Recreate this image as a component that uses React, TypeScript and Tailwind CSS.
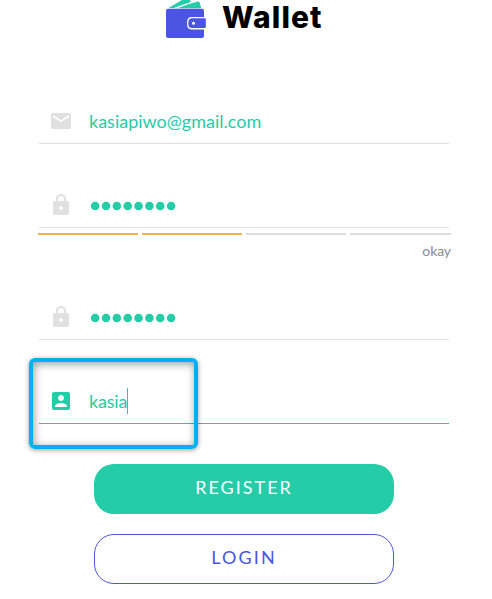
import type { ReactNode } from 'react';

const paths = {
  email: 'M20 4H4c-1.1 0-1.99.9-1.99 2L2 18c0 1.1.9 2 2 2h16c1.1 0 2-.9 2-2V6c0-1.1-.9-2-2-2zm0 4l-8 5-8-5V6l8 5 8-5v2z',
  lock: 'M18 8h-1V6c0-2.76-2.24-5-5-5S7 3.24 7 6v2H6c-1.1 0-2 .9-2 2v10c0 1.1.9 2 2 2h12c1.1 0 2-.9 2-2V10c0-1.1-.9-2-2-2zm-6 9c-1.1 0-2-.9-2-2s.9-2 2-2 2 .9 2 2-.9 2-2 2zm3.1-9H8.9V6c0-1.71 1.39-3.1 3.1-3.1 1.71 0 3.1 1.39 3.1 3.1v2z',
  account: 'M3 5v14c0 1.1.89 2 2 2h14c1.1 0 2-.9 2-2V5c0-1.1-.9-2-2-2H5c-1.11 0-2 .9-2 2zm12 4c0 1.66-1.34 3-3 3s-3-1.34-3-3 1.34-3 3-3 3 1.34 3 3zm-9 8c0-2 4-3.1 6-3.1s6 1.1 6 3.1v1H6v-1z',
};

function Field({ icon, active, children }: { icon: keyof typeof paths; active?: boolean; children: ReactNode }) {
  return (
    <div className={`flex h-[35px] w-[410px] items-start border-b pl-2.5 ${active ? 'border-[#24cca7]' : 'border-[#e0e0e0]'}`}>
      <svg viewBox="0 0 24 24" className={`size-6 shrink-0 ${active ? 'fill-[#24cca7]' : 'fill-[#e0e0e0]'}`}>
        <path d={paths[icon]} />
      </svg>
      <div className="ml-4 flex h-6 items-center text-[18px] leading-6 text-[#24cca7]">{children}</div>
    </div>
  );
}

function Dots() {
  return (
    <svg viewBox="0 0 90 24" className="h-6 w-[90px] fill-[#24cca7]">
      {Array.from({ length: 8 }, (_, i) => (
        <circle key={i} cx={6.15 + i * 10.85} cy="13" r="4.3" />
      ))}
    </svg>
  );
}

function Logo() {
  return (
    <svg viewBox="0 0 41 39" className="h-[39px] w-[41px] shrink-0">
      <path d="M2.5 8 16 0h8l1 2L9 8z" fill="#24cca7" />
      <path d="M11 8.200 22 4.200 32 1.600q1.200-.2 1.600 1L35 7q0 1.200-1 1.200z" fill="#24cca7" />
      <path d="m8 8.500 18-6.300" stroke="#fff" strokeWidth="1" />
      <rect y="8.700" width="38" height="29.300" rx="2" fill="#4a56e2" />
      <path d="M41 17H25.500c-3 0-4.500 2-4.500 6.200s1.500 6.200 4.500 6.200H41z" fill="#fff" />
      <path d="M38.500 18.300H26c-2.600 0-3.700 1.600-3.700 4.900s1.100 4.900 3.700 4.900h12.500c.8 0 1.300-.5 1.300-1.300v-7.200c0-.8-.5-1.300-1.300-1.300z" fill="#4a56e2" />
      <circle cx="27.500" cy="23.300" r="1.500" fill="#fff" />
    </svg>
  );
}

export default function App() {
  return (
    <main className="relative h-[599px] w-[492px] overflow-hidden bg-white font-['Lato',sans-serif]">
      <header className="flex h-[109px] items-start pl-[166px]">
        <Logo />
        <h1 className="ml-[15px] font-['Inter',sans-serif] text-[30px] leading-[35px] font-extrabold tracking-[1.1px] text-black">Wallet</h1>
      </header>
      <form className="flex flex-col pl-[39px]">
        <Field icon="email"><span>kasiapiwo@gmail.com</span></Field>
        <div className="mt-[49px]"><Field icon="lock"><Dots /></Field></div>
        <div className="mt-[5px] -ml-px grid w-[413px] grid-cols-[100px_100px_100px_101px] gap-1">
          <span className="h-0.5 bg-[#f4b14d]" />
          <span className="h-0.5 bg-[#f4b14d]" />
          <span className="h-0.5 bg-[#ddd]" />
          <span className="h-0.5 bg-[#ddd]" />
        </div>
        <p className="mt-1.5 h-5 w-[412px] text-right text-[14px] leading-5 tracking-[-0.1px] text-[#8a8a94]">okay</p>
        <div className="mt-[44px]"><Field icon="lock"><Dots /></Field></div>
        <div className="mt-[49px]">
          <Field icon="account" active>
            <span className="tracking-[-0.2px]">kasia</span>
            <span className="h-[26px] w-px shrink-0 bg-[#24cca7]" />
          </Field>
        </div>
      </form>
      <div className="mt-10 flex flex-col gap-5 pl-[94px]">
        <button className="h-[50px] w-[300px] rounded-[20px] bg-[#24cca7] pb-[3px] text-[18px] tracking-[2px] text-white">REGISTER</button>
        <button className="h-[50px] w-[300px] rounded-[20px] border border-[#4a56e2] bg-white pb-[3px] text-[18px] tracking-[2.1px] text-[#4a56e2]">LOGIN</button>
      </div>
      <div className="pointer-events-none absolute top-[358px] left-[29px] h-[91px] w-[169px] rounded-[6px] border-4 border-[#00b0f0] shadow-[0_1px_5px_rgba(0,0,0,0.4),inset_1px_2px_8px_rgba(0,0,0,0.4)]" />
    </main>
  );
}
